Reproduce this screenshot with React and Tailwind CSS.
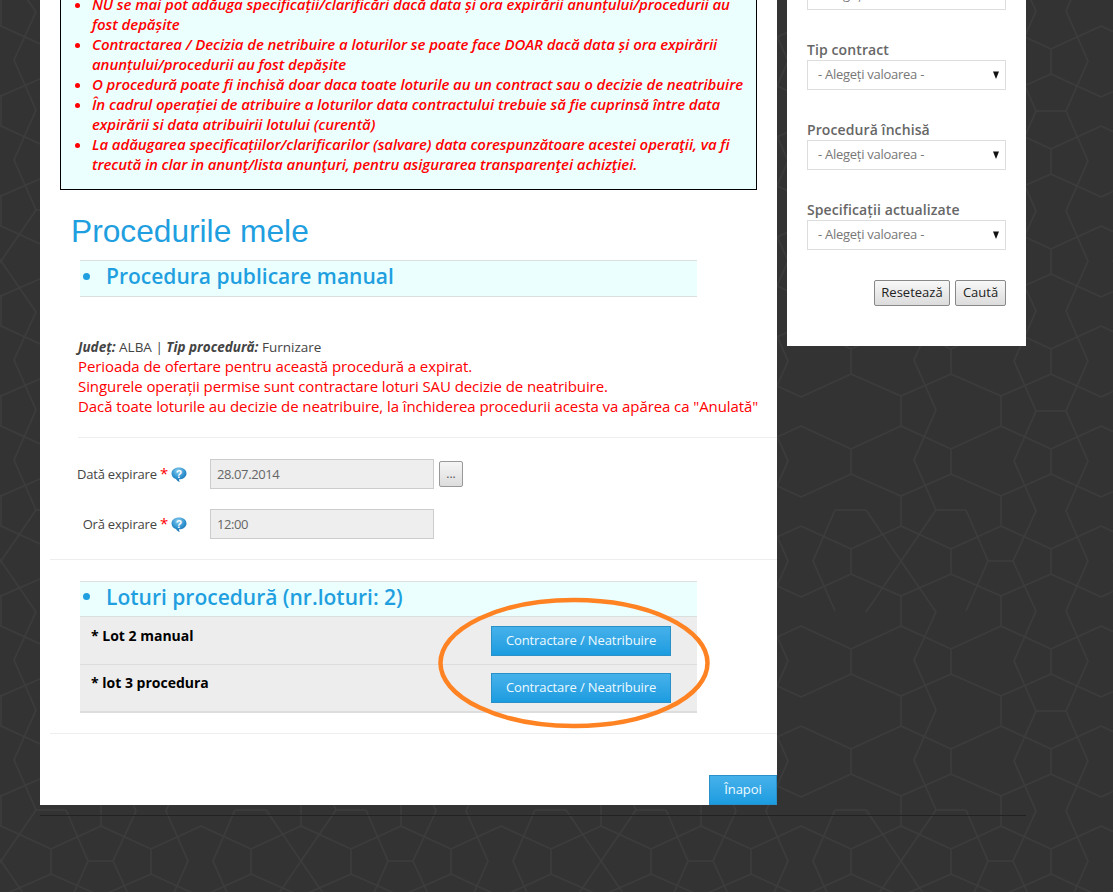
import React from "react";

const notes = [
  ["NU se mai pot adăuga specificații/clarificări dacă data și ora expirării anunțului/procedurii au", "fost depășite"],
  ["Contractarea / Decizia de netribuire a loturilor se poate face DOAR dacă data și ora expirării", "anunțului/procedurii au fost depășite"],
  ["O procedură poate fi inchisă doar daca toate loturile au un contract sau o decizie de neatribuire"],
  ["În cadrul operației de atribuire a loturilor data contractului trebuie să fie cuprinsă între data", "expirării si data atribuirii lotului (curentă)"],
  ["La adăugarea specificațiilor/clarificarilor (salvare) data corespunzătoare acestei operaţii, va fi", "trecută in clar in anunţ/lista anunţuri, pentru asigurarea transparenţei achizţiei."],
];

const lots = ["* Lot 2 manual", "* lot 3 procedura"];
const filters = ["Tip contract", "Procedură închisă", "Specificații actualizate"];

// 300x300 tile of the dark page background
const tileLines = [
  ...[0, 100, 200].flatMap((d) => [
    `1,${26 + d} 51,${49 + d} 101,${26 + d} 151,${49 + d} 201,${26 + d} 251,${49 + d} 301,${26 + d}`,
    `1,${96 + d} 51,${74 + d} 101,${96 + d} 151,${74 + d} 201,${97 + d} 251,${74 + d} 301,${96 + d}`,
    `51,${49 + d} 51,${74 + d}`,
    `151,${49 + d} 151,${74 + d}`,
    `251,${49 + d} 251,${74 + d}`,
    `1,${-4 + d} 1,${26 + d}`,
    `101,${-4 + d} 101,${26 + d}`,
  ]),
  "166,11 188,61 166,111 188,161 166,211 188,261 166,311",
  "136,11 114,61 136,111 114,161 136,211 113,261 136,311",
  "136,111 166,111",
  "88,261 113,261",
  "235,210 266,210",
  "36,210 66,210",
  "66,210 88,261 66,311",
  "235,210 213,261 235,311",
  "266,210 301,261 336,312",
  "336,210 301,261 266,312",
  "36,12 14,60 36,110 14,160 36,210",
];

const tileOffsets = [[0, 0], [-300, 0], [300, 0], [0, -300], [0, 300], [-300, -300], [300, 300]];

const Backdrop = () => (
  <svg className="absolute inset-0 w-full h-full" aria-hidden="true">
    <defs>
      <pattern id="tile" width="300" height="300" patternUnits="userSpaceOnUse">
        {tileOffsets.map(([x, y]) => (
          <g key={`${x}-${y}`} transform={`translate(${x} ${y})`} fill="none" stroke="#3c3c3c" strokeWidth="1.5">
            {tileLines.map((points) => (
              <polyline key={points} points={points} />
            ))}
          </g>
        ))}
      </pattern>
    </defs>
    <rect width="100%" height="100%" fill="url(#tile)" />
  </svg>
);

const HelpIcon = ({ id }) => (
  <svg width="16" height="16" viewBox="0 0 16 16" className="shrink-0 mt-[2px]">
    <defs>
      <radialGradient id={id} cx="45%" cy="25%" r="80%">
        <stop offset="0%" stopColor="#8fd0f0" />
        <stop offset="55%" stopColor="#2f93d0" />
        <stop offset="100%" stopColor="#14609f" />
      </radialGradient>
    </defs>
    <path d="M8 .5C3.600.5.500 3 .500 6.400c0 2.600 1.800 4.600 4.500 5.500.6 1.200 2 2.600 3.800 3.100-.7-.9-.9-1.800-.8-2.700 4-.1 7.500-2.500 7.500-5.900C15.500 3 12.400.5 8 .5z" fill={`url(#${id})`} />
    <text x="8" y="10.500" textAnchor="middle" fontSize="10.500" fontWeight="700" fontFamily="Liberation Sans, sans-serif" fill="#ffffff">?</text>
  </svg>
);

const SectionTitle = ({ children, className }) => (
  <div className={`ml-10 w-[617px] flex items-center bg-[#ebffff] border-y border-[#dcdfe0] text-[#1f9fe0] text-[21px] leading-none font-semibold ${className}`}>
    <span className="-mt-[5px] w-[7px] h-[7px] rounded-full bg-[#1f9fe0] ml-[3px] mr-4"></span>
    <span className="-mt-1">{children}</span>
  </div>
);

const BlueButton = ({ children, className }) => (
  <button className={`h-[30px] bg-linear-to-b from-[#45b1ea] to-[#1a9ce0] border border-[#2a90c8] text-[#eefaff] text-[13px] tracking-[-0.1px] ${className}`}>
    {children}
  </button>
);

const DateRow = ({ label, value, id, children }) => (
  <div className="flex items-center h-[30px]">
    <div className="w-[128px] -mt-[2px] text-right text-[13px] tracking-[-0.2px] text-[#444]">
      {label} <span className="text-[#f00] text-[15px]">*</span>
    </div>
    <span className="ml-[3px]"><HelpIcon id={id} /></span>
    <div className="ml-[23px] w-[224px] h-[30px] bg-[#eeeeee] border border-[#cccccc] text-[13px] tracking-[-0.4px] text-[#666] leading-[28px] px-[6px]">{value}</div>
    {children}
  </div>
);

const SelectBox = () => (
  <div className="h-[30px] border border-[#dddddd] flex items-center justify-between pl-[10px] pr-[6px] text-[13px] tracking-[-0.27px] text-[#777]">
    <span>- Alegeți valoarea -</span>
    <svg width="6" height="8" viewBox="0 0 6 8"><path d="M0 .5h6L3 8z" fill="#111" /></svg>
  </div>
);

export default function App() {
  return (
    <div className="relative h-[892px] overflow-hidden bg-[#333333] font-['Open_Sans',sans-serif]">
      <Backdrop />

      <div className="relative flex items-start gap-[10px] pl-10 -mt-5">
        <main className="relative w-[737px] bg-white flex flex-col">
          <div className="ml-5 w-[697px] border border-black bg-[#ebffff] pt-[13px] pb-[15px] pl-[31px] text-[15px] tracking-[-0.08px] leading-5 italic font-semibold text-[#f00]">
            <ul className="list-disc whitespace-nowrap">
              {notes.map((lines) => (
                <li key={lines[0]}>
                  {lines.map((line, i) => (
                    <span key={line}>{i > 0 && <br />}{line}</span>
                  ))}
                </li>
              ))}
            </ul>
          </div>

          <h1 className="ml-[31px] mt-[23px] text-[31.700px] leading-9 font-['Liberation_Sans',sans-serif] text-[#1f9fe0]">Procedurile mele</h1>
          <SectionTitle className="mt-[11px] h-[37px]">Procedura publicare manual</SectionTitle>

          <div className="ml-[38px] mt-10 leading-5 whitespace-nowrap">
            <p className="text-[13.500px] text-[#444]"><b className="italic">Județ:</b> ALBA | <b className="italic">Tip procedură:</b> Furnizare</p>
            <div className="-mt-px text-[15px] tracking-[-0.08px] font-medium text-[#f00]">
              <p>Perioada de ofertare pentru această procedură a expirat.</p>
              <p>Singurele operații permise sunt contractare loturi SAU decizie de neatribuire.</p>
              <p>Dacă toate loturile au decizie de neatribuire, la închiderea procedurii acesta va apărea ca "Anulată"</p>
            </div>
          </div>

          <div className="ml-[38px] mt-[21px] h-px bg-[#eeeeee]"></div>

          <div className="mt-[21px] flex flex-col gap-5">
            <DateRow label="Dată expirare" value="28.07.2014" id="help-date">
              <button className="ml-[5px] w-6 h-[26px] rounded-[2px] bg-linear-to-b from-[#f5f5f5] to-[#dddddd] border border-[#999] text-[12px] leading-none text-[#555]">...</button>
            </DateRow>
            <DateRow label="Oră expirare" value="12:00" id="help-time" />
          </div>

          <div className="ml-[10px] mt-5 h-px bg-[#eeeeee]"></div>

          <SectionTitle className="mt-[21px] h-[36px]">Loturi procedură (nr.loturi: 2)</SectionTitle>
          <div className="ml-10 w-[617px] bg-[#ededed] border-b-2 border-[#dddddd]">
            {lots.map((lot, i) => (
              <div key={lot} className={`h-[47px] flex justify-between pl-[11px] pr-[26px] ${i > 0 ? "pt-2 border-t border-[#dddddd]" : "pt-[9px]"}`}>
                <span className="text-[14px] leading-5 font-bold text-black">{lot}</span>
                <BlueButton className="w-[180px]">Contractare / Neatribuire</BlueButton>
              </div>
            ))}
          </div>

          <div className="ml-[10px] mt-5 h-px bg-[#eeeeee]"></div>
          <BlueButton className="self-end mt-[41px] w-[68px]">Înapoi</BlueButton>

          <svg className="absolute left-[397px] top-[616px]" width="274" height="134" viewBox="0 0 274 134" aria-hidden="true">
            <ellipse cx="137" cy="67" rx="133.500" ry="63" fill="none" stroke="#ff8323" strokeWidth="4.500" />
          </svg>
        </main>

        <aside className="w-[239px] bg-white px-5 pb-10">
          <SelectBox />
          {filters.map((name) => (
            <div key={name} className="mt-[30px]">
              <div className="text-[14px] tracking-[0.1px] leading-5 font-semibold text-[#666]">{name}</div>
              <SelectBox />
            </div>
          ))}
          <div className="mt-[30px] flex justify-end gap-[5px]">
            <button className="w-[76px] h-[26px] rounded-[2px] bg-linear-to-b from-[#f8f8f8] to-[#dcdcdc] border border-[#888] text-[13px] text-[#222]">Resetează</button>
            <button className="w-[51px] h-[26px] rounded-[2px] bg-linear-to-b from-[#f8f8f8] to-[#dcdcdc] border border-[#888] text-[13px] text-[#222]">Caută</button>
          </div>
        </aside>
      </div>

      <div className="relative ml-10 mt-[10px] w-[986px] h-px bg-[#222222]"></div>
    </div>
  );
}
